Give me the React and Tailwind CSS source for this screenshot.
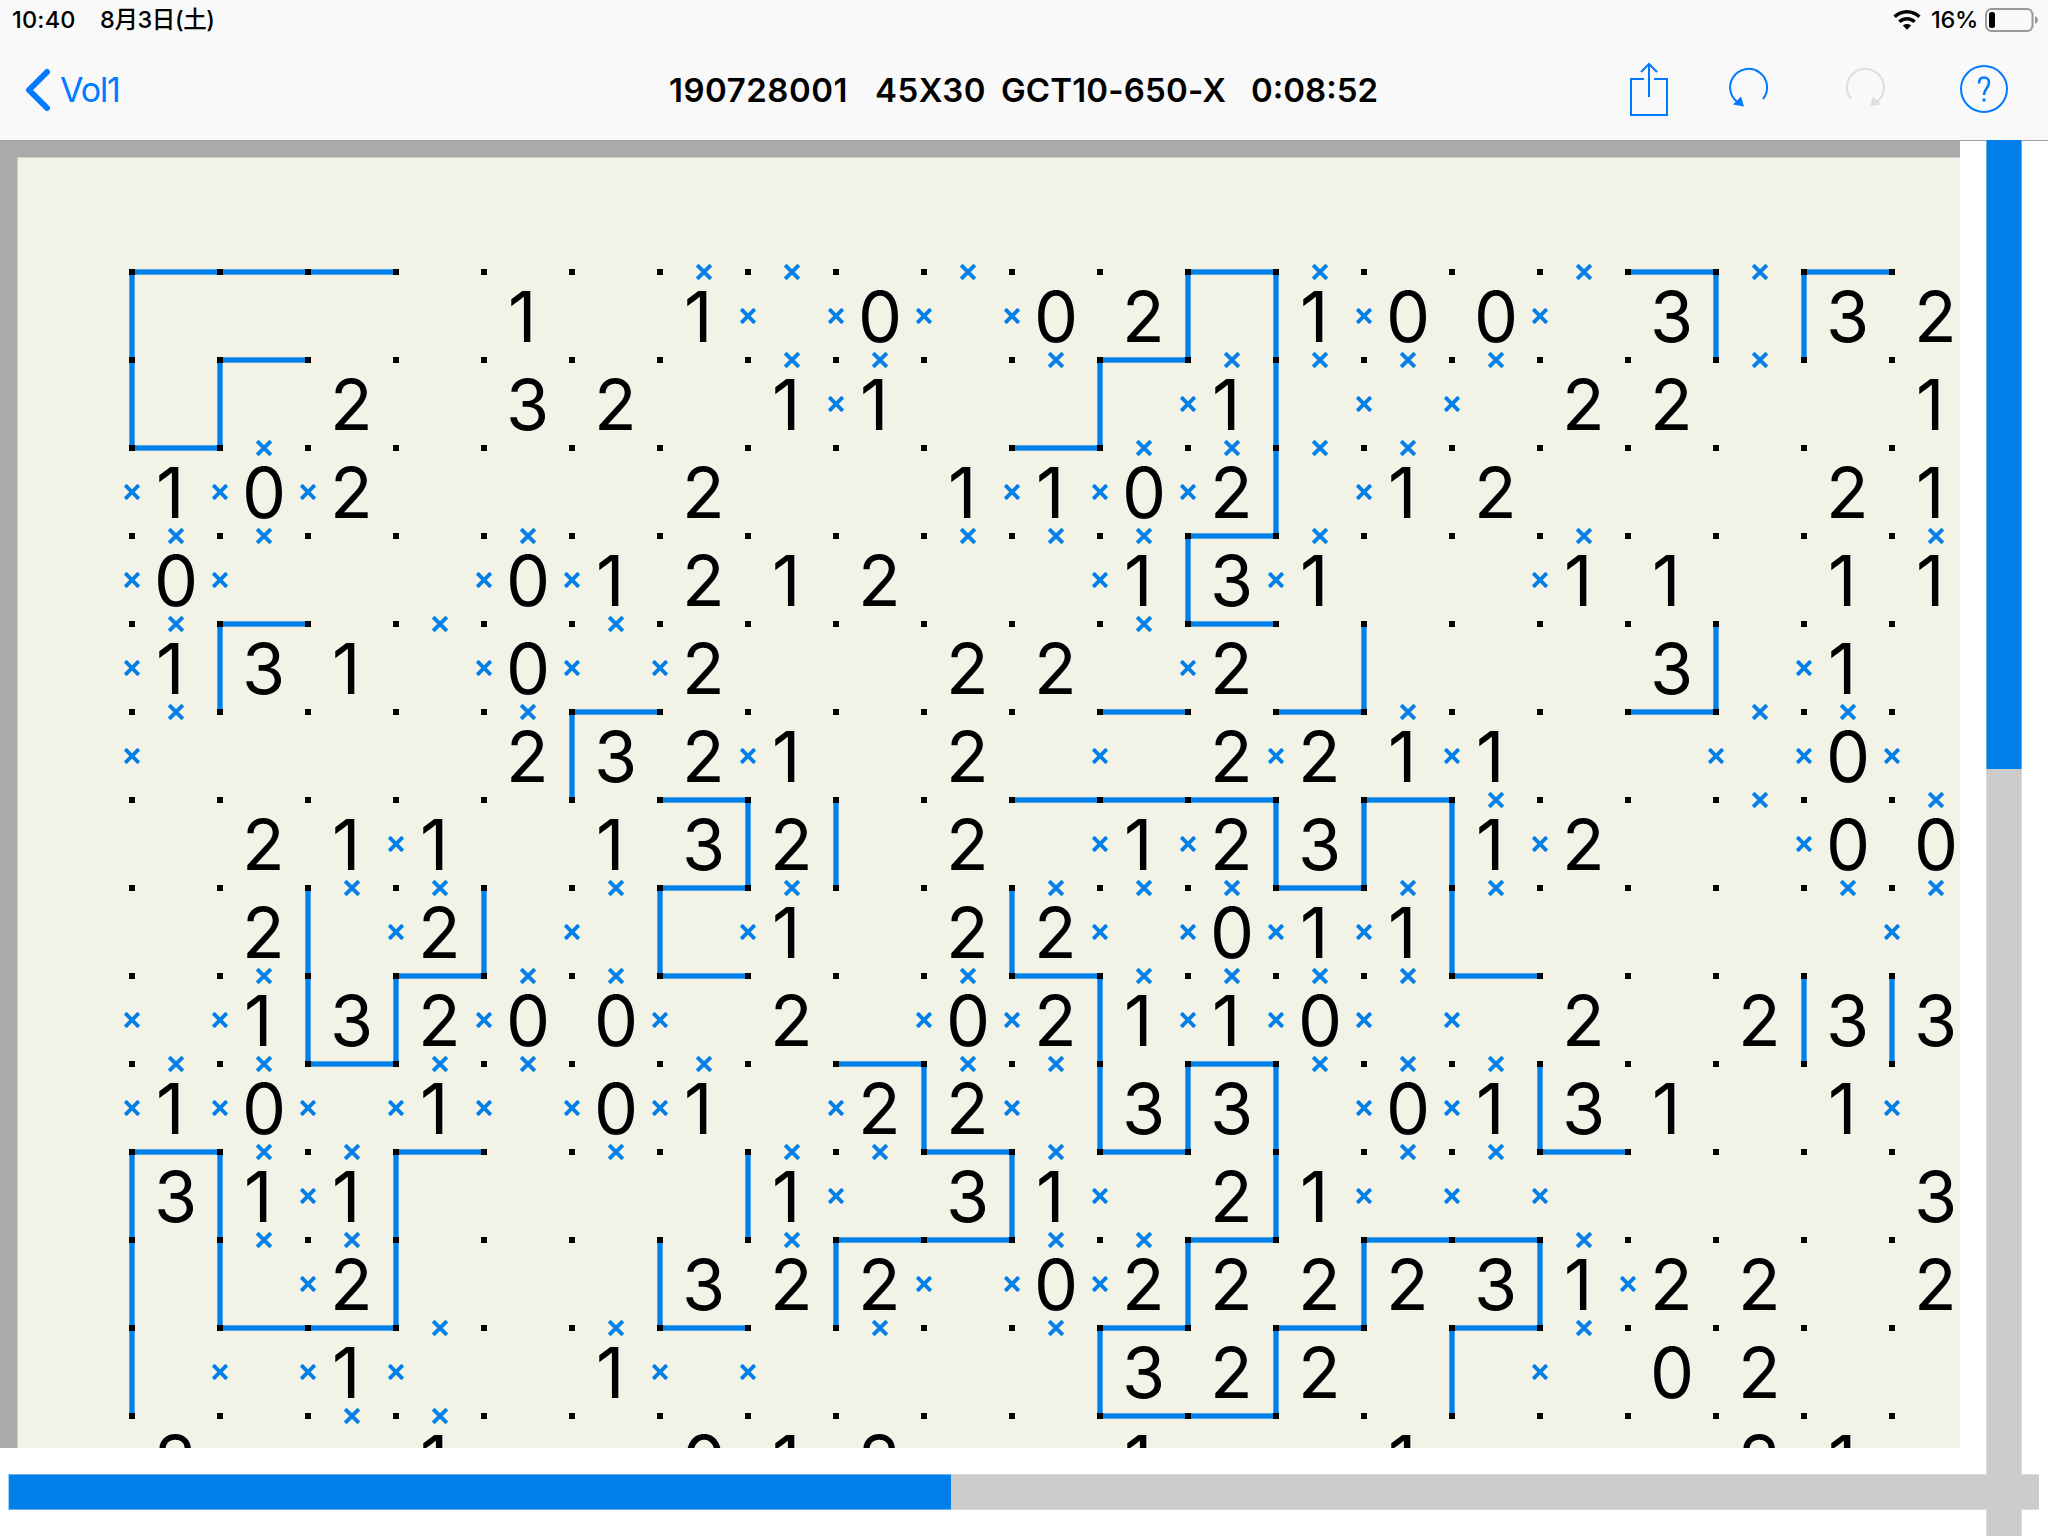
const COLUMNS = 21;

const DIGITS = [
  '....1.1.0.02.100.3.32',
  '..2.32.11...1...22..1',
  '102...2..1102.12...21',
  '0...01212..131..11.11',
  '131.0.2..22.2....3.1.',
  '....2321.2..2211...0.',
  '.211.132.2.123.12..00',
  '.2.2...1.22.011......',
  '.13200.2.02110..2.233',
  '10.1.01.22.33.0131.1.',
  '311....1.31.21......3',
  '..2...322.02222312' + '2.2',
  '..1..1.....322...02..',
  '2..1..012..1..1...21.',
];

// Edges above each row of cells: "-" is a drawn segment, "x" a crossed-out one.
const TOP_EDGES = [
  '0- 1- 2- 6x 7x 9x 12- 13x 16x 17- 18x 19-',
  '1- 7x 8x 10x 11- 12x 13x 14x 15x 18x',
  '0- 1x 10- 11x 12x 13x 14x',
  '0x 1x 4x 9x 10x 11x 12- 13x 16x 20x',
  '0x 1- 3x 5x 11x 12-',
  '0x 4x 5- 11- 13- 14x 17- 18x 19x',
  '6- 10- 11- 12- 14- 15x 18x 20x',
  '2x 3x 5x 6- 7x 10x 11x 12x 13- 14x 15x 19x 20x',
  '1x 3- 4x 5x 6- 9x 10- 11x 12x 13x 14x 15-',
  '0x 1x 2- 3x 4x 6x 8- 9x 10x 12- 13x 14x 15x',
  '0- 1x 2x 3- 5x 7x 8x 9- 10x 11- 14x 15x 16-',
  '1x 2x 7x 8- 9- 10x 11x 12- 14- 15- 16x',
  '1- 2- 3x 5x 6- 8x 10x 11- 13- 15- 16x',
  '2x 3x 11- 12-',
];

// Edges to the left of each cell.
const LEFT_EDGES = [
  '0- 7x 8x 9x 10x 12- 13- 14x 16x 18- 19-',
  '0- 1- 8x 11- 12x 13- 14x 15x',
  '0x 1x 2x 10x 11x 12x 13- 14x',
  '0x 1x 4x 5x 11x 12- 13x 16x',
  '0x 1- 4x 5x 6x 12x 14- 18- 19x',
  '0x 5- 7x 11x 13x 15x 18x 19x 20x',
  '3x 7- 8- 11x 12x 13- 14- 15- 16x 19x',
  '2- 3x 4- 5x 6- 7x 10- 11x 12x 13x 14x 15- 20x',
  '0x 1x 2- 3- 4x 6x 9x 10x 11- 12x 13x 14x 15x 19- 20-',
  '0x 1x 2x 3x 4x 5x 6x 8x 9- 10x 11- 12- 13- 14x 15x 16- 20x',
  '0- 1- 2x 3- 7- 8x 10- 11x 13- 14x 15x 16x',
  '0- 1- 2x 3- 6- 8- 9x 10x 11x 12- 14- 16- 17x',
  '0- 1x 2x 3x 6x 7x 11- 13- 15- 16x',
  '',
];

function parseEdges(row) {
  const edges = {};
  row.split(' ').filter(Boolean).forEach((token) => {
    edges[Number(token.slice(0, -1))] = token.slice(-1);
  });
  return edges;
}

function Cross({ className }) {
  return (
    <svg className={`absolute h-5 w-5 ${className}`} viewBox="0 0 20 20" fill="none" stroke="#0080e8" strokeWidth="3.8">
      <path d="M3.2 3.2 16.8 16.8M16.8 3.2 3.2 16.8" />
    </svg>
  );
}

function Cell({ digit, top, left }) {
  return (
    <div className="relative h-[88px] w-[88px]">
      {digit !== '.' && (
        <span className={`block pt-px text-[70px] leading-[88px] text-black ${digit === '1' ? 'pl-6' : 'pl-[22px]'}`}>
          {digit}
        </span>
      )}
      {top === '-' && <i className="absolute -top-[3px] left-0 h-1.5 w-[88px] border-y border-[#4fa7ea] bg-[#0080e8]" />}
      {top === 'x' && <Cross className="-top-2.5 left-[34px]" />}
      {left === '-' && <i className="absolute top-0 -left-[3px] h-[88px] w-1.5 border-x border-[#4fa7ea] bg-[#0080e8]" />}
      {left === 'x' && <Cross className="top-[34px] -left-2.5" />}
    </div>
  );
}

function Board() {
  return (
    <div className="h-[1307px] w-[1960px] overflow-hidden bg-[#aaaaaa] pt-4 pl-[17px]">
      <div className="h-[1400px] w-[2100px] border-t border-l border-[#cfcfc8] bg-[#f2f2e6] pt-[114px] pl-[114px]">
        <div className="grid auto-rows-[88px] grid-cols-[repeat(21,88px)]">
          {DIGITS.map((row, r) => {
            const top = parseEdges(TOP_EDGES[r]);
            const left = parseEdges(LEFT_EDGES[r]);
            return Array.from({ length: COLUMNS }, (_, c) => (
              <Cell key={`${r}-${c}`} digit={row[c]} top={top[c]} left={left[c]} />
            ));
          })}
        </div>
        <div className="relative -top-[1235px] -left-[3px] z-10 grid grid-cols-[repeat(21,88px)]">
          {Array.from({ length: COLUMNS * 14 }, (_, i) => (
            <div key={i} className="h-[88px]">
              <div className="h-1.5 w-1.5 bg-black" />
            </div>
          ))}
        </div>
      </div>
    </div>
  );
}

function StatusBar() {
  return (
    <div className="flex h-10 items-center text-[23.5px] leading-10 font-medium text-black">
      <span className="ml-3 w-[88px] tracking-[0.2px] whitespace-nowrap">10:40</span>
      <span className="tracking-[-0.4px] whitespace-nowrap">8月3日(土)</span>
      <svg className="ml-auto h-5 w-7" viewBox="0 0 28 20">
        <path d="M14 0C8.700 0 3.900 2.100.4 5.500L2.900 8C5.800 5.200 9.700 3.500 14 3.500S22.200 5.200 25.100 8L27.600 5.500C24.100 2.100 19.300 0 14 0Z" />
        <path d="M14 7C10.600 7 7.500 8.300 5.200 10.400L7.700 12.900C9.400 11.400 11.600 10.500 14 10.500S18.600 11.400 20.300 12.900L22.800 10.400C20.500 8.300 17.400 7 14 7Z" />
        <path d="M14 14C12.400 14 11 14.500 9.900 15.500L14 19.700 18.100 15.500C17 14.500 15.600 14 14 14Z" />
      </svg>
      <span className="ml-2.5 w-[54px] tracking-[-0.3px] whitespace-nowrap">16%</span>
      <svg className="mr-[9px] h-6 w-[54px]" viewBox="0 0 54 24">
        <rect x="1" y="1" width="46.500" height="22" rx="5.500" fill="none" stroke="#999" strokeWidth="2" />
        <rect x="4" y="4" width="6" height="16" rx="2.500" />
        <path d="M50 8.200C51.800 8.800 53 10.200 53 12S51.800 15.200 50 15.800Z" fill="#999" />
      </svg>
    </div>
  );
}

function NavBar() {
  return (
    <div className="flex h-[100px] text-[#007aff]">
      <div className="flex w-[669px] text-[34px] leading-[100px]">
        <svg className="mt-7 ml-6 h-11 w-8" viewBox="0 0 32 44" fill="none" stroke="currentColor" strokeWidth="6" strokeLinecap="round" strokeLinejoin="round">
          <path d="M23 4 5 22 23 40" />
        </svg>
        <span className="ml-1 tracking-[-1.1px]">Vol1</span>
      </div>
      <div className="flex text-[33px] leading-[100px] font-semibold whitespace-nowrap text-black">
        <span className="w-[206px] tracking-[0.5px]">190728001</span>
        <span className="w-[126px] tracking-[0.5px]">45X30</span>
        <span className="w-[250px] tracking-[0.15px]">GCT10-650-X</span>
        <span>0:08:52</span>
      </div>
      <div className="ml-auto flex h-full">
        <svg className="mt-[22px] h-[56px] w-10" viewBox="0 0 40 56" fill="none" stroke="currentColor" strokeWidth="2">
          <path d="M15 17H2V53H38V17H25" />
          <path d="M20 35V2M12 10 20 2 28 10" />
        </svg>
        <svg className="mt-[26px] ml-[58px] h-[42px] w-[44px]" viewBox="0 0 44 42" fill="none" stroke="currentColor" strokeWidth="2">
          <path d="M36 33A18.500 18.500 0 1 0 12.500 37.500" />
          <path d="M14 30.500 6 38.500 17 40.500Z" fill="currentColor" stroke="none" />
        </svg>
        <svg className="mt-[26px] ml-[72px] h-[42px] w-[44px] text-[#dfdfdf]" viewBox="0 0 44 42" fill="none" stroke="currentColor" strokeWidth="2">
          <path d="M8 33A18.500 18.500 0 1 1 31.500 37.500" />
          <path d="M30 30.500 38 38.500 27 40.500Z" fill="currentColor" stroke="none" />
        </svg>
        <svg className="mt-6 mr-[39px] ml-[72px] h-[50px] w-[50px]" viewBox="0 0 50 50" fill="none" stroke="currentColor" strokeWidth="2">
          <circle cx="25" cy="25" r="23" />
          <path d="M20 19.500C20 15.500 22 13.500 25 13.500S30 15.500 30 18.500C30 24 25 24.500 25 31" strokeWidth="2.600" />
          <path d="M23.500 34.500H26.500V37.500H23.500Z" fill="currentColor" stroke="none" />
        </svg>
      </div>
    </div>
  );
}

export default function App() {
  return (
    <div className="relative flex h-[1536px] w-[2048px] flex-col overflow-hidden bg-white font-['Inter','Noto_Sans_CJK_JP',sans-serif]">
      <header className="h-[141px] shrink-0 border-b border-[#a0a0a0] bg-[#f9f9f9]">
        <StatusBar />
        <NavBar />
      </header>
      <main className="flex h-[1395px]">
        <div className="w-[1986px]">
          <Board />
          <div className="mt-[26px] ml-2 flex h-9 w-[2031px] border-y border-[#d9d9d9] bg-[#cccccc]">
            <div className="-my-px h-9 w-[943px] border-y border-l border-[#66b3f0] border-l-[#a8d4f6] bg-[#0080e8]" />
          </div>
        </div>
        <div className="z-10 -mt-px flex h-[1396px] w-9 shrink-0 flex-col bg-[#cccccc]">
          <div className="h-[629px] border-x border-[#66b3f0] bg-[#0080e8]" />
          <div className="h-[706px] border-x border-[#d9d9d9]" />
          <div className="h-[34px]" />
          <div className="grow border-x border-[#d9d9d9]" />
        </div>
      </main>
    </div>
  );
}
